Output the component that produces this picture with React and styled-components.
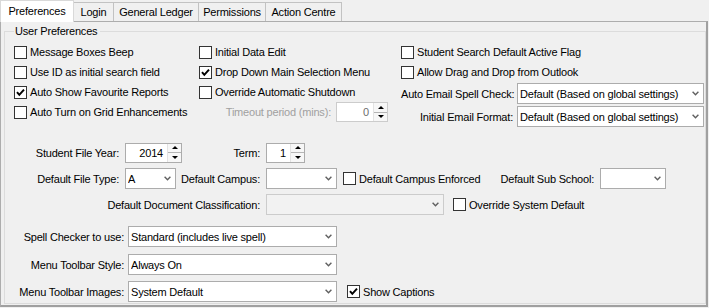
import React from "react";
import styled, { createGlobalStyle } from "styled-components";

const GlobalStyle = createGlobalStyle`
  html, body {
    margin: 0;
    padding: 0;
    background: #f0f0f0;
  }
  body {
    font-family: "Liberation Sans", Arial, sans-serif;
    font-size: 11px;
    color: #000;
  }
`;

const Window = styled.div`
  width: 709px;
  height: 308px;
  background: #f0f0f0;
  letter-spacing: -0.2px;
`;

const TabStrip = styled.div`
  display: flex;
  align-items: flex-end;
  height: 21px;
`;

const Tab = styled.div`
  box-sizing: border-box;
  width: ${(p) => p.$w}px;
  height: ${(p) => (p.$active ? 22 : 19)}px;
  margin-left: ${(p) => (p.$first ? 0 : -1)}px;
  margin-bottom: ${(p) => (p.$active ? -1 : 0)}px;
  display: flex;
  align-items: center;
  justify-content: center;
  padding-bottom: ${(p) => (p.$active ? 2 : 0)}px;
  background: ${(p) => (p.$active ? "#ffffff" : "#f0f0f0")};
  border: 1px solid ${(p) => (p.$active ? "#d9d9d9" : "#c2c2c2")};
  border-bottom: none;
  position: relative;
  z-index: ${(p) => (p.$active ? 1 : 0)};
  white-space: nowrap;
`;

const Panel = styled.div`
  box-sizing: border-box;
  width: 708px;
  height: 286px;
  border: 1px solid #adadad;
  border-right: 2px solid #a0a0a0;
  border-bottom: 2px solid #a0a0a0;
  display: flex;
  flex-direction: column;
  padding-left: 3px;
`;

const GroupBox = styled.fieldset`
  flex: 1;
  min-width: 0;
  margin: 2px 0 1px 0;
  padding: 0 0 0 9px;
  border: 1px solid #dcdcdc;
`;

const Legend = styled.legend`
  padding: 1px 3px 0 1px;
  line-height: 13px;
`;

const TopSection = styled.div`
  display: flex;
  margin-top: 4px;
`;

const Column = styled.div`
  display: flex;
  flex-direction: column;
  width: ${(p) => (p.$w ? `${p.$w}px` : "auto")};
  flex: ${(p) => (p.$w ? "none" : 1)};
`;

const CheckRow = styled.label`
  display: flex;
  align-items: center;
  gap: 3px;
  height: 20px;
  white-space: nowrap;
  margin-left: ${(p) => p.$ml || 0}px;
  width: ${(p) => (p.$w ? `${p.$w}px` : "auto")};
  flex: none;
`;

const Box = styled.span`
  box-sizing: border-box;
  width: 13px;
  height: 13px;
  flex: none;
  border: 1px solid #333333;
  background: #ffffff;
  display: flex;
  align-items: center;
  justify-content: center;
`;

const FieldRow = styled.div`
  display: flex;
  align-items: center;
  height: ${(p) => p.$h || 21}px;
  margin-top: ${(p) => p.$mt || 0}px;
`;

const Label = styled.div`
  box-sizing: border-box;
  width: ${(p) => p.$w}px;
  flex: none;
  text-align: right;
  padding-right: ${(p) => (p.$pr === undefined ? 6 : p.$pr)}px;
  white-space: nowrap;
  color: ${(p) => (p.$disabled ? "#a0a0a0" : "#000")};
`;

const Combo = styled.div`
  box-sizing: border-box;
  width: ${(p) => p.$w}px;
  height: 21px;
  flex: none;
  display: flex;
  align-items: center;
  padding: 0 4px 0 2px;
  border: 1px solid ${(p) => (p.$disabled ? "#cccccc" : "#acacac")};
  background: ${(p) => (p.$disabled ? "#f2f2f2" : "#ffffff")};
`;

const ComboText = styled.span`
  flex: 1;
  white-space: nowrap;
  overflow: hidden;
`;

const Spin = styled.div`
  box-sizing: border-box;
  width: ${(p) => p.$w}px;
  height: 20px;
  flex: none;
  display: flex;
  border: 1px solid ${(p) => (p.$disabled ? "#cccccc" : "#acacac")};
  background: #ffffff;
`;

const SpinValue = styled.div`
  flex: 1;
  display: flex;
  align-items: center;
  justify-content: flex-end;
  padding-right: 4px;
  color: ${(p) => (p.$disabled ? "#6d6d6d" : "#000")};
`;

const SpinButtons = styled.div`
  width: 13px;
  display: flex;
  flex-direction: column;
  border-left: 1px solid #e3e3e3;
  background: #f7f7f7;
`;

const SpinHalf = styled.div`
  flex: 1;
  display: flex;
  align-items: center;
  justify-content: center;
  border-top: ${(p) => (p.$down ? "1px solid #b5b5b5" : "none")};
`;

const Arrow = styled.span`
  width: 0;
  height: 0;
  border-left: 3px solid transparent;
  border-right: 3px solid transparent;
  ${(p) =>
    p.$down
      ? "border-top: 3px solid #000;"
      : "border-bottom: 3px solid #000;"}
`;

const Chevron = () => (
  <svg width="7" height="5" viewBox="0 0 7 5">
    <polyline
      points="0.6,0.8 3.5,3.8 6.4,0.8"
      fill="none"
      stroke="#606060"
      strokeWidth="1.4"
    />
  </svg>
);

const Check = ({ checked, children, ml, w }) => (
  <CheckRow $ml={ml} $w={w}>
    <Box>
      {checked && (
        <svg width="11" height="11" viewBox="0 0 11 11">
          <polyline
            points="2,5.2 4.3,7.8 9,2.6"
            fill="none"
            stroke="#000"
            strokeWidth="2"
          />
        </svg>
      )}
    </Box>
    {children}
  </CheckRow>
);

const Select = ({ w, value, disabled }) => (
  <Combo $w={w} $disabled={disabled}>
    <ComboText>{value}</ComboText>
    <Chevron />
  </Combo>
);

const SpinBox = ({ w, value, disabled }) => (
  <Spin $w={w} $disabled={disabled}>
    <SpinValue $disabled={disabled}>{value}</SpinValue>
    <SpinButtons>
      <SpinHalf>
        <Arrow />
      </SpinHalf>
      <SpinHalf $down>
        <Arrow $down />
      </SpinHalf>
    </SpinButtons>
  </Spin>
);

const tabs = [
  { name: "Preferences", w: 74 },
  { name: "Login", w: 41 },
  { name: "General Ledger", w: 86 },
  { name: "Permissions", w: 68 },
  { name: "Action Centre", w: 77 },
];

const App = () => (
  <Window>
    <GlobalStyle />
    <TabStrip>
      {tabs.map((t, i) => (
        <Tab key={t.name} $w={t.w} $active={i === 0} $first={i === 0}>
          {t.name}
        </Tab>
      ))}
    </TabStrip>
    <Panel>
      <GroupBox>
        <Legend>User Preferences</Legend>
        <TopSection>
          <Column $w={185}>
            <Check>Message Boxes Beep</Check>
            <Check>Use ID as initial search field</Check>
            <Check checked>Auto Show Favourite Reports</Check>
            <Check>Auto Turn on Grid Enhancements</Check>
          </Column>
          <Column $w={202}>
            <Check>Initial Data Edit</Check>
            <Check checked>Drop Down Main Selection Menu</Check>
            <Check>Override Automatic Shutdown</Check>
            <FieldRow $h={20}>
              <Label $w={137} $pr={5} $disabled>
                Timeout period (mins):
              </Label>
              <SpinBox w={52} value="0" disabled />
            </FieldRow>
          </Column>
          <Column>
            <Check>Student Search Default Active Flag</Check>
            <Check>Allow Drag and Drop from Outlook</Check>
            <FieldRow $mt={1}>
              <Label $w={116} $pr={4}>
                Auto Email Spell Check:
              </Label>
              <Select w={187} value="Default (Based on global settings)" />
            </FieldRow>
            <FieldRow $mt={2}>
              <Label $w={116} $pr={4}>
                Initial Email Format:
              </Label>
              <Select w={187} value="Default (Based on global settings)" />
            </FieldRow>
          </Column>
        </TopSection>

        <FieldRow $mt={15}>
          <Label $w={111}>Student File Year:</Label>
          <SpinBox w={57} value="2014" />
          <Label $w={84}>Term:</Label>
          <SpinBox w={39} value="1" />
        </FieldRow>
        <FieldRow $mt={5}>
          <Label $w={111}>Default File Type:</Label>
          <Select w={51} value="A" />
          <Label $w={90}>Default Campus:</Label>
          <Select w={71} value="" />
          <Check ml={6} w={137}>
            Default Campus Enforced
          </Check>
          <Label $w={120}>Default Sub School:</Label>
          <Select w={66} value="" />
        </FieldRow>
        <FieldRow $mt={5}>
          <Label $w={252}>Default Document Classification:</Label>
          <Select w={178} value="" disabled />
          <Check ml={9}>Override System Default</Check>
        </FieldRow>

        <FieldRow $mt={11}>
          <Label $w={114} $pr={4}>
            Spell Checker to use:
          </Label>
          <Select w={209} value="Standard (includes live spell)" />
        </FieldRow>
        <FieldRow $mt={7}>
          <Label $w={114} $pr={4}>
            Menu Toolbar Style:
          </Label>
          <Select w={209} value="Always On" />
        </FieldRow>
        <FieldRow $mt={6}>
          <Label $w={114} $pr={4}>
            Menu Toolbar Images:
          </Label>
          <Select w={209} value="System Default" />
          <Check checked ml={10}>
            Show Captions
          </Check>
        </FieldRow>
      </GroupBox>
    </Panel>
  </Window>
);

export default App;
